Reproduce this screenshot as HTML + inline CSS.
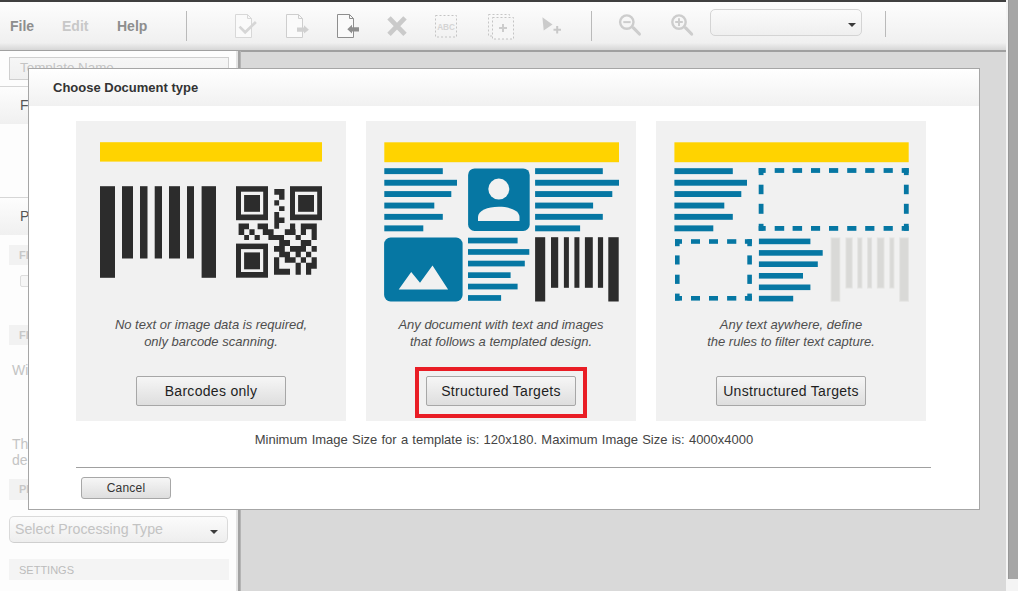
<!DOCTYPE html>
<html><head><meta charset="utf-8">
<style>
*{box-sizing:border-box}
html,body{margin:0;padding:0}
body{width:1018px;height:591px;position:relative;overflow:hidden;background:#d9d9d9;font-family:"Liberation Sans",sans-serif}
.abs{position:absolute}
#topbar{left:0;top:0;width:1006px;height:2px;background:#404040}
#scroll{left:1006px;top:0;width:12px;height:591px;background:#f4f4f4}
#scrollthumb{left:1008px;top:0;width:10px;height:579px;background:#a6a6a6;border-left:1.5px solid #979797}
#toolbar{left:0;top:2px;width:1006px;height:48px;background:linear-gradient(#fdfdfd,#f0f0f0 85%,#d6d6d6)}
#tbshadow{left:0;top:49.5px;width:1006px;height:2px;background:#a0a0a0}
.menu{top:18px;font-size:14px;font-weight:bold;color:#8e8e8e}
.sep{width:1px;background:#bababa}
#sidebar{left:0;top:51px;width:238px;height:541px;background:#fdfdfd}
#sbborder{left:236px;top:51px;width:5px;height:541px;background:linear-gradient(90deg,#e4e4e4 0,#e4e4e4 2px,#a2a2a2 2px,#a2a2a2 3.5px,#bdbdbd 5px)}
.sbhead{left:0;width:237px;border-top:1px solid #d6d6d6;background:linear-gradient(#fdfdfd,#f0f0f0)}
.sbband{left:9px;width:220px;height:20px;background:#f2f2f2}
.sbtxt{font-size:14px;color:#555}
.sbgray{font-size:14px;color:#c4c4c4}
.bandtxt{font-size:11px;font-weight:bold;color:#c8c8c8;left:10px;top:4px}
#dialog{left:28px;top:68px;width:952px;height:442px;background:#fff;border:1px solid #a6a6a6}
#dlghead{left:0;top:0;width:950px;height:37px;background:linear-gradient(#fff,#f1f1f1)}
#dlgtitle{left:24px;top:10.5px;font-size:13px;font-weight:bold;color:#333}
.card{top:52px;width:270px;height:300px;background:#f1f1f1}
.desc{position:absolute;left:0;width:270px;top:195px;text-align:center;font-size:13px;font-style:italic;color:#4e4e4e;line-height:17px}
.btn{position:absolute;left:60px;top:255px;width:150px;height:30px;border:1px solid #a7a7a7;border-radius:2px;background:linear-gradient(#f6f6f6,#dedede);font-size:14px;color:#1e1e1e;text-align:center;line-height:28px;letter-spacing:0.3px}
</style></head><body>
<div id="topbar" class="abs"></div>
<div id="toolbar" class="abs"></div>
<div id="tbshadow" class="abs"></div>
<div class="abs menu" style="left:10px">File</div>
<div class="abs menu" style="left:62px;color:#c8c8c8">Edit</div>
<div class="abs menu" style="left:117px">Help</div>
<div class="abs sep" style="left:186px;top:11px;height:30px"></div>
<div class="abs sep" style="left:591px;top:11px;height:30px"></div>
<div class="abs sep" style="left:885px;top:11px;height:26px"></div>
<div class="abs" style="left:710px;top:9px;width:152px;height:27px;border:1px solid #d4d4d4;border-radius:5px;background:linear-gradient(#fbfbfb,#efefef)"></div>
<div class="abs" style="left:848px;top:22.5px;width:0;height:0;border-left:4px solid transparent;border-right:4px solid transparent;border-top:4.5px solid #3a3a3a"></div>
<svg class="abs" style="left:0;top:0" width="1018" height="50" viewBox="0 0 1018 50">
<g fill="none" stroke-linejoin="miter">
<path d="M235.5,14.5 H247.5 L251.5,18.5 V37.5 H235.5 Z M247.5,14.5 V18.5 H251.5" fill="#fafafa" stroke="#d8d8d8" stroke-width="1"/>
<path d="M239.5,26.6 L245.2,32.3 L255.9,22.1" stroke="#d6d6d6" stroke-width="2.7"/>
<path d="M286.5,14.5 H298.5 L302.5,18.5 V37.5 H286.5 Z M298.5,14.5 V18.5 H302.5" fill="#fafafa" stroke="#cecece" stroke-width="1"/>
<path d="M337.5,14.5 H349.5 L353.5,18.5 V37.5 H337.5 Z M349.5,14.5 V18.5 H353.5" fill="#fafafa" stroke="#8e8e8e" stroke-width="1"/>
<path d="M389,17.8 L405,34.4 M405,17.8 L389,34.4" stroke="#cacaca" stroke-width="4.8"/>
<rect x="435.5" y="15.5" width="21" height="21.5" stroke="#c4c4c4" stroke-width="1" stroke-dasharray="2,2"/>
<rect x="488.5" y="14.5" width="21" height="21.5" stroke="#c6c6c6" stroke-width="1" stroke-dasharray="2,2"/>
<rect x="492.5" y="17.5" width="21" height="21.5" fill="#f6f6f6" stroke="#c4c4c4" stroke-width="1" stroke-dasharray="2,2"/>
<path d="M499,27.9 H507 M503,23.9 V31.9" stroke="#cccccc" stroke-width="2"/>
<path d="M553.5,29.7 H561 M557.2,26 V33.5" stroke="#c8c8c8" stroke-width="2"/>
<circle cx="626.8" cy="22.1" r="6.7" stroke="#cdcdcd" stroke-width="2.4"/>
<path d="M633.4,27.9 L639.4,34" stroke="#cdcdcd" stroke-width="3.2" stroke-linecap="round"/>
<path d="M623.3,22.1 H630.6" stroke="#cdcdcd" stroke-width="2"/>
<circle cx="679" cy="22.1" r="6.7" stroke="#cdcdcd" stroke-width="2.4"/>
<path d="M685.6,27.9 L691.6,34" stroke="#cdcdcd" stroke-width="3.2" stroke-linecap="round"/>
<path d="M675.2,22.1 H682.8 M679,18.3 V25.9" stroke="#cdcdcd" stroke-width="2"/>
</g>
<path d="M297,27.4 H304 V25.2 L308.9,29.7 L304,33.6 V31.8 H297 Z" fill="#d0d0d0"/>
<path d="M347.3,29.2 L352,24.8 V27.2 H359 V31.4 H352 V33.6 Z" fill="#8e8e8e"/>
<path d="M542.4,17.3 L552.5,24.6 L543.7,30.5 Z" fill="#cbcbcb"/>
<text x="446" y="30.2" font-family="Liberation Sans" font-weight="bold" font-size="8.2" fill="#d4d4d4" text-anchor="middle">ABC</text>
</svg>


<div id="sidebar" class="abs"></div>
<div id="sbborder" class="abs"></div>
<div class="abs" style="left:9px;top:57px;width:220px;height:23px;border:1px solid #cfcfcf;background:linear-gradient(#f6f6f6,#f0f0f0)"></div>
<div class="abs" style="left:20px;top:59.5px;font-size:13.4px;color:#c4c4c4">Template Name</div>
<div class="abs sbhead" style="top:86px;height:38px"></div>
<div class="abs sbtxt" style="left:20px;top:97px">F</div>
<div class="abs sbhead" style="top:197px;height:38px"></div>
<div class="abs sbtxt" style="left:20px;top:208px">P</div>
<div class="abs sbband" style="top:245px"><div class="abs bandtxt">FI</div></div>
<div class="abs" style="left:20px;top:275px;width:12px;height:12px;border:1px solid #ddd;border-radius:2px;background:#f6f6f6"></div>
<div class="abs sbband" style="top:325px"><div class="abs bandtxt">FI</div></div>
<div class="abs sbgray" style="left:12px;top:362px">Wi</div>
<div class="abs sbgray" style="left:12px;top:436px;line-height:16px">Th<br>de</div>
<div class="abs sbband" style="top:479px;height:21px"><div class="abs bandtxt">PI</div></div>
<div class="abs" style="left:9px;top:516px;width:219px;height:27px;border:1px solid #dadada;border-bottom-color:#cfcfcf;border-radius:5px;background:linear-gradient(#fbfbfb,#eeeeee)"></div>
<div class="abs" style="left:15px;top:521px;font-size:14.2px;color:#c3c3c3">Select Processing Type</div>
<div class="abs" style="left:209.8px;top:529.5px;width:0;height:0;border-left:4px solid transparent;border-right:4px solid transparent;border-top:4px solid #3c3c3c"></div>
<div class="abs" style="left:9px;top:559px;width:220px;height:21px;background:#f4f4f4"></div>
<div class="abs" style="left:19px;top:564px;font-size:11px;color:#bcbcbc">SETTINGS</div>

<div id="scroll" class="abs"></div>
<div id="scrollthumb" class="abs"></div>

<div id="dialog" class="abs">
  <div id="dlghead" class="abs"></div>
  <div id="dlgtitle" class="abs">Choose Document type</div>
  <div class="abs card" style="left:47px">
    <div class="desc">No text or image data is required,<br>only barcode scanning.</div>
    <div class="btn">Barcodes only</div>
  </div>
  <div class="abs card" style="left:337px">
    <div class="desc">Any document with text and images<br>that follows a templated design.</div>
    <div class="btn">Structured Targets</div>
  </div>
  <div class="abs card" style="left:627px">
    <div class="desc">Any text aywhere, define<br>the rules to filter text capture.</div>
    <div class="btn">Unstructured Targets</div>
  </div>
  <div class="abs" style="left:0;width:950px;top:363px;text-align:center;font-size:13px;color:#444;word-spacing:0.6px">Minimum Image Size for a template is: 120x180. Maximum Image Size is: 4000x4000</div>
  <div class="abs" style="left:47px;top:398px;width:855px;height:1px;background:#a0a0a0"></div>
  <div class="abs btn" style="left:52px;top:408px;width:90px;height:22px;font-size:12px;line-height:20px;border-radius:3px;letter-spacing:0.2px;color:#333">Cancel</div>
</div>
<svg class="abs" style="left:0;top:0" width="1018" height="591" viewBox="0 0 1018 591"><rect x="100.0" y="142.2" width="222.0" height="19.4" fill="#ffd300"/><rect x="100.0" y="186.2" width="15.0" height="91.6" fill="#2c2c2c"/><rect x="122.0" y="186.2" width="11.0" height="72.3" fill="#2c2c2c"/><rect x="140.0" y="186.2" width="7.5" height="72.3" fill="#2c2c2c"/><rect x="154.7" y="186.2" width="7.3" height="72.3" fill="#2c2c2c"/><rect x="169.0" y="186.2" width="11.0" height="72.3" fill="#2c2c2c"/><rect x="187.0" y="186.2" width="7.0" height="72.3" fill="#2c2c2c"/><rect x="201.6" y="186.2" width="14.4" height="91.6" fill="#2c2c2c"/><rect x="236.0" y="186.2" width="32.0" height="34.0" fill="#2c2c2c"/><rect x="241.0" y="191.7" width="22.2" height="22.8" fill="#f1f1f1"/><rect x="244.1" y="195.0" width="15.9" height="16.8" fill="#2c2c2c"/><rect x="290.0" y="186.2" width="32.0" height="34.0" fill="#2c2c2c"/><rect x="295.0" y="191.7" width="22.2" height="22.8" fill="#f1f1f1"/><rect x="298.1" y="195.0" width="15.9" height="16.8" fill="#2c2c2c"/><rect x="236.0" y="243.6" width="32.0" height="34.1" fill="#2c2c2c"/><rect x="241.0" y="249.1" width="22.2" height="22.9" fill="#f1f1f1"/><rect x="244.1" y="252.4" width="15.9" height="16.9" fill="#2c2c2c"/><path d="M274.30,188.90H284.50V194.80H274.30ZM279.10,194.80H284.50V199.70H279.10ZM274.30,200.20H279.10V205.60H274.30ZM279.10,206.20H284.50V211.00H279.10ZM274.30,212.10H279.10V228.80H274.30ZM279.10,217.50H284.50V222.90H279.10ZM238.60,223.60H249.00V229.20H238.60ZM257.60,223.60H268.00V229.20H257.60ZM290.00,223.60H295.20V229.20H290.00ZM300.80,223.60H316.80V229.20H300.80ZM238.60,229.20H244.20V234.90H238.60ZM249.40,229.20H254.60V234.90H249.40ZM262.80,229.20H273.60V234.90H262.80ZM284.80,229.20H295.60V234.90H284.80ZM300.80,229.20H306.00V234.90H300.80ZM311.60,229.20H316.80V234.90H311.60ZM244.20,234.90H249.00V240.00H244.20ZM254.60,234.90H259.80V240.00H254.60ZM268.40,234.90H284.00V240.00H268.40ZM295.60,234.90H300.80V240.00H295.60ZM311.60,234.90H316.80V240.00H311.60ZM279.20,240.00H290.00V246.10H279.20ZM300.80,240.00H311.20V246.10H300.80ZM274.00,246.10H284.80V251.70H274.00ZM290.00,246.10H306.00V251.70H290.00ZM311.60,246.10H316.80V251.70H311.60ZM279.20,251.70H290.00V257.30H279.20ZM295.60,251.70H300.80V257.30H295.60ZM306.00,251.70H311.20V257.30H306.00ZM274.00,257.30H279.20V262.80H274.00ZM284.80,257.30H295.60V262.80H284.80ZM300.80,257.30H306.00V262.80H300.80ZM311.60,257.30H316.80V262.80H311.60ZM274.00,262.80H279.20V268.80H274.00ZM295.60,262.80H300.80V268.80H295.60ZM306.00,262.80H316.80V268.80H306.00ZM274.00,268.80H290.00V274.70H274.00ZM295.60,268.80H300.80V274.70H295.60ZM306.00,268.80H311.20V274.70H306.00Z" fill="#2c2c2c"/><rect x="384.3" y="142.3" width="234.7" height="19.9" fill="#ffd300"/><rect x="384.3" y="168.2" width="58.5" height="5.9" fill="#0677a3"/><rect x="384.3" y="179.8" width="72.7" height="5.9" fill="#0677a3"/><rect x="384.3" y="191.1" width="67.0" height="5.9" fill="#0677a3"/><rect x="384.3" y="202.6" width="50.0" height="5.9" fill="#0677a3"/><rect x="384.3" y="213.9" width="58.5" height="5.9" fill="#0677a3"/><rect x="384.3" y="225.4" width="39.0" height="5.9" fill="#0677a3"/><rect x="535.1" y="168.2" width="67.7" height="5.9" fill="#0677a3"/><rect x="535.1" y="179.8" width="83.9" height="5.9" fill="#0677a3"/><rect x="535.1" y="191.1" width="77.2" height="5.9" fill="#0677a3"/><rect x="535.1" y="202.6" width="58.0" height="5.9" fill="#0677a3"/><rect x="535.1" y="213.9" width="67.7" height="5.9" fill="#0677a3"/><rect x="535.1" y="225.4" width="45.0" height="5.9" fill="#0677a3"/><rect x="468.1" y="168.4" width="61.6" height="62.6" rx="6.5" fill="#0677a3"/><circle cx="498.8" cy="189.1" r="10.5" fill="#f1f1f1"/><path d="M478,221 L478,217 C478,210.5 487.5,206.7 498.75,206.7 C510,206.7 519.5,210.5 519.5,217 L519.5,221 Z" fill="#f1f1f1"/><rect x="384.1" y="237.5" width="78.5" height="63.9" rx="6.5" fill="#0677a3"/><polygon points="398.7,289.6 411.2,272 420,282.8 432.5,265.6 448.1,289.6" fill="#f1f1f1"/><rect x="468.0" y="237.7" width="49.6" height="5.7" fill="#0677a3"/><rect x="468.0" y="249.1" width="61.3" height="5.7" fill="#0677a3"/><rect x="468.0" y="260.7" width="56.8" height="5.7" fill="#0677a3"/><rect x="468.0" y="272.3" width="42.6" height="5.7" fill="#0677a3"/><rect x="468.0" y="283.7" width="49.6" height="5.7" fill="#0677a3"/><rect x="468.0" y="295.1" width="33.1" height="5.7" fill="#0677a3"/><rect x="535.1" y="237.2" width="10.1" height="64.3" fill="#2c2c2c"/><rect x="551.0" y="237.2" width="7.2" height="50.6" fill="#2c2c2c"/><rect x="563.9" y="237.2" width="5.0" height="50.6" fill="#2c2c2c"/><rect x="574.4" y="237.2" width="5.0" height="50.6" fill="#2c2c2c"/><rect x="584.9" y="237.2" width="7.9" height="50.6" fill="#2c2c2c"/><rect x="597.9" y="237.2" width="5.2" height="50.6" fill="#2c2c2c"/><rect x="608.3" y="237.2" width="10.4" height="64.3" fill="#2c2c2c"/><rect x="674.4" y="142.3" width="234.3" height="19.9" fill="#ffd300"/><rect x="674.4" y="168.2" width="58.4" height="5.9" fill="#0677a3"/><rect x="674.4" y="179.8" width="72.6" height="5.9" fill="#0677a3"/><rect x="674.4" y="191.1" width="66.9" height="5.9" fill="#0677a3"/><rect x="674.4" y="202.6" width="49.9" height="5.9" fill="#0677a3"/><rect x="674.4" y="213.9" width="58.4" height="5.9" fill="#0677a3"/><rect x="674.4" y="225.4" width="38.9" height="5.9" fill="#0677a3"/><rect x="774.7" y="168.1" width="9.5" height="4.8" fill="#0677a3"/><rect x="774.7" y="226.0" width="9.5" height="4.8" fill="#0677a3"/><rect x="792.6" y="168.1" width="9.5" height="4.8" fill="#0677a3"/><rect x="792.6" y="226.0" width="9.5" height="4.8" fill="#0677a3"/><rect x="811.0" y="168.1" width="9.1" height="4.8" fill="#0677a3"/><rect x="811.0" y="226.0" width="9.1" height="4.8" fill="#0677a3"/><rect x="829.0" y="168.1" width="9.2" height="4.8" fill="#0677a3"/><rect x="829.0" y="226.0" width="9.2" height="4.8" fill="#0677a3"/><rect x="847.2" y="168.1" width="9.2" height="4.8" fill="#0677a3"/><rect x="847.2" y="226.0" width="9.2" height="4.8" fill="#0677a3"/><rect x="865.2" y="168.1" width="9.2" height="4.8" fill="#0677a3"/><rect x="865.2" y="226.0" width="9.2" height="4.8" fill="#0677a3"/><rect x="883.6" y="168.1" width="9.2" height="4.8" fill="#0677a3"/><rect x="883.6" y="226.0" width="9.2" height="4.8" fill="#0677a3"/><rect x="758.7" y="184.7" width="4.8" height="9.5" fill="#0677a3"/><rect x="903.9" y="184.7" width="4.8" height="9.5" fill="#0677a3"/><rect x="758.7" y="203.8" width="4.8" height="10.0" fill="#0677a3"/><rect x="903.9" y="203.8" width="4.8" height="10.0" fill="#0677a3"/><rect x="758.7" y="168.1" width="7.0" height="4.8" fill="#0677a3"/><rect x="758.7" y="168.1" width="4.8" height="7.0" fill="#0677a3"/><rect x="901.7" y="168.1" width="7.0" height="4.8" fill="#0677a3"/><rect x="903.9" y="168.1" width="4.8" height="7.0" fill="#0677a3"/><rect x="758.7" y="226.0" width="7.0" height="4.8" fill="#0677a3"/><rect x="758.7" y="223.8" width="4.8" height="7.0" fill="#0677a3"/><rect x="901.7" y="226.0" width="7.0" height="4.8" fill="#0677a3"/><rect x="903.9" y="223.8" width="4.8" height="7.0" fill="#0677a3"/><rect x="691.0" y="239.2" width="9.0" height="4.6" fill="#0677a3"/><rect x="691.0" y="296.0" width="9.0" height="4.6" fill="#0677a3"/><rect x="709.0" y="239.2" width="9.0" height="4.6" fill="#0677a3"/><rect x="709.0" y="296.0" width="9.0" height="4.6" fill="#0677a3"/><rect x="727.1" y="239.2" width="9.2" height="4.6" fill="#0677a3"/><rect x="727.1" y="296.0" width="9.2" height="4.6" fill="#0677a3"/><rect x="675.0" y="255.4" width="4.6" height="9.1" fill="#0677a3"/><rect x="747.3" y="255.4" width="4.6" height="9.1" fill="#0677a3"/><rect x="675.0" y="274.7" width="4.6" height="9.2" fill="#0677a3"/><rect x="747.3" y="274.7" width="4.6" height="9.2" fill="#0677a3"/><rect x="675.0" y="239.2" width="7.0" height="4.6" fill="#0677a3"/><rect x="675.0" y="239.2" width="4.6" height="7.0" fill="#0677a3"/><rect x="744.9" y="239.2" width="7.0" height="4.6" fill="#0677a3"/><rect x="747.3" y="239.2" width="4.6" height="7.0" fill="#0677a3"/><rect x="675.0" y="296.0" width="7.0" height="4.6" fill="#0677a3"/><rect x="675.0" y="293.6" width="4.6" height="7.0" fill="#0677a3"/><rect x="744.9" y="296.0" width="7.0" height="4.6" fill="#0677a3"/><rect x="747.3" y="293.6" width="4.6" height="7.0" fill="#0677a3"/><rect x="758.9" y="238.6" width="51.5" height="5.6" fill="#0677a3"/><rect x="758.9" y="250.1" width="63.8" height="5.6" fill="#0677a3"/><rect x="758.9" y="261.4" width="58.9" height="5.6" fill="#0677a3"/><rect x="758.9" y="273.0" width="44.1" height="5.6" fill="#0677a3"/><rect x="758.9" y="284.5" width="51.5" height="5.6" fill="#0677a3"/><rect x="758.9" y="295.8" width="34.3" height="5.6" fill="#0677a3"/><rect x="830.6" y="237.4" width="9.7" height="64.3" fill="#e3e3e1"/><rect x="831.6" y="238.4" width="7.7" height="62.3" fill="#d9d9d7"/><rect x="845.4" y="237.4" width="7.3" height="51.1" fill="#e3e3e1"/><rect x="846.4" y="238.4" width="5.3" height="49.1" fill="#d9d9d7"/><rect x="857.2" y="237.4" width="5.2" height="51.1" fill="#e3e3e1"/><rect x="858.2" y="238.4" width="3.2" height="49.1" fill="#d9d9d7"/><rect x="867.1" y="237.4" width="5.0" height="51.1" fill="#e3e3e1"/><rect x="868.1" y="238.4" width="3.0" height="49.1" fill="#d9d9d7"/><rect x="876.8" y="237.4" width="7.7" height="51.1" fill="#e3e3e1"/><rect x="877.8" y="238.4" width="5.7" height="49.1" fill="#d9d9d7"/><rect x="889.3" y="237.4" width="5.1" height="51.1" fill="#e3e3e1"/><rect x="890.3" y="238.4" width="3.1" height="49.1" fill="#d9d9d7"/><rect x="899.2" y="237.4" width="9.7" height="64.3" fill="#e3e3e1"/><rect x="900.2" y="238.4" width="7.7" height="62.3" fill="#d9d9d7"/></svg>
<div class="abs" style="left:415px;top:367px;width:172px;height:51px;border:4.8px solid #e91d25"></div>
</body></html>
